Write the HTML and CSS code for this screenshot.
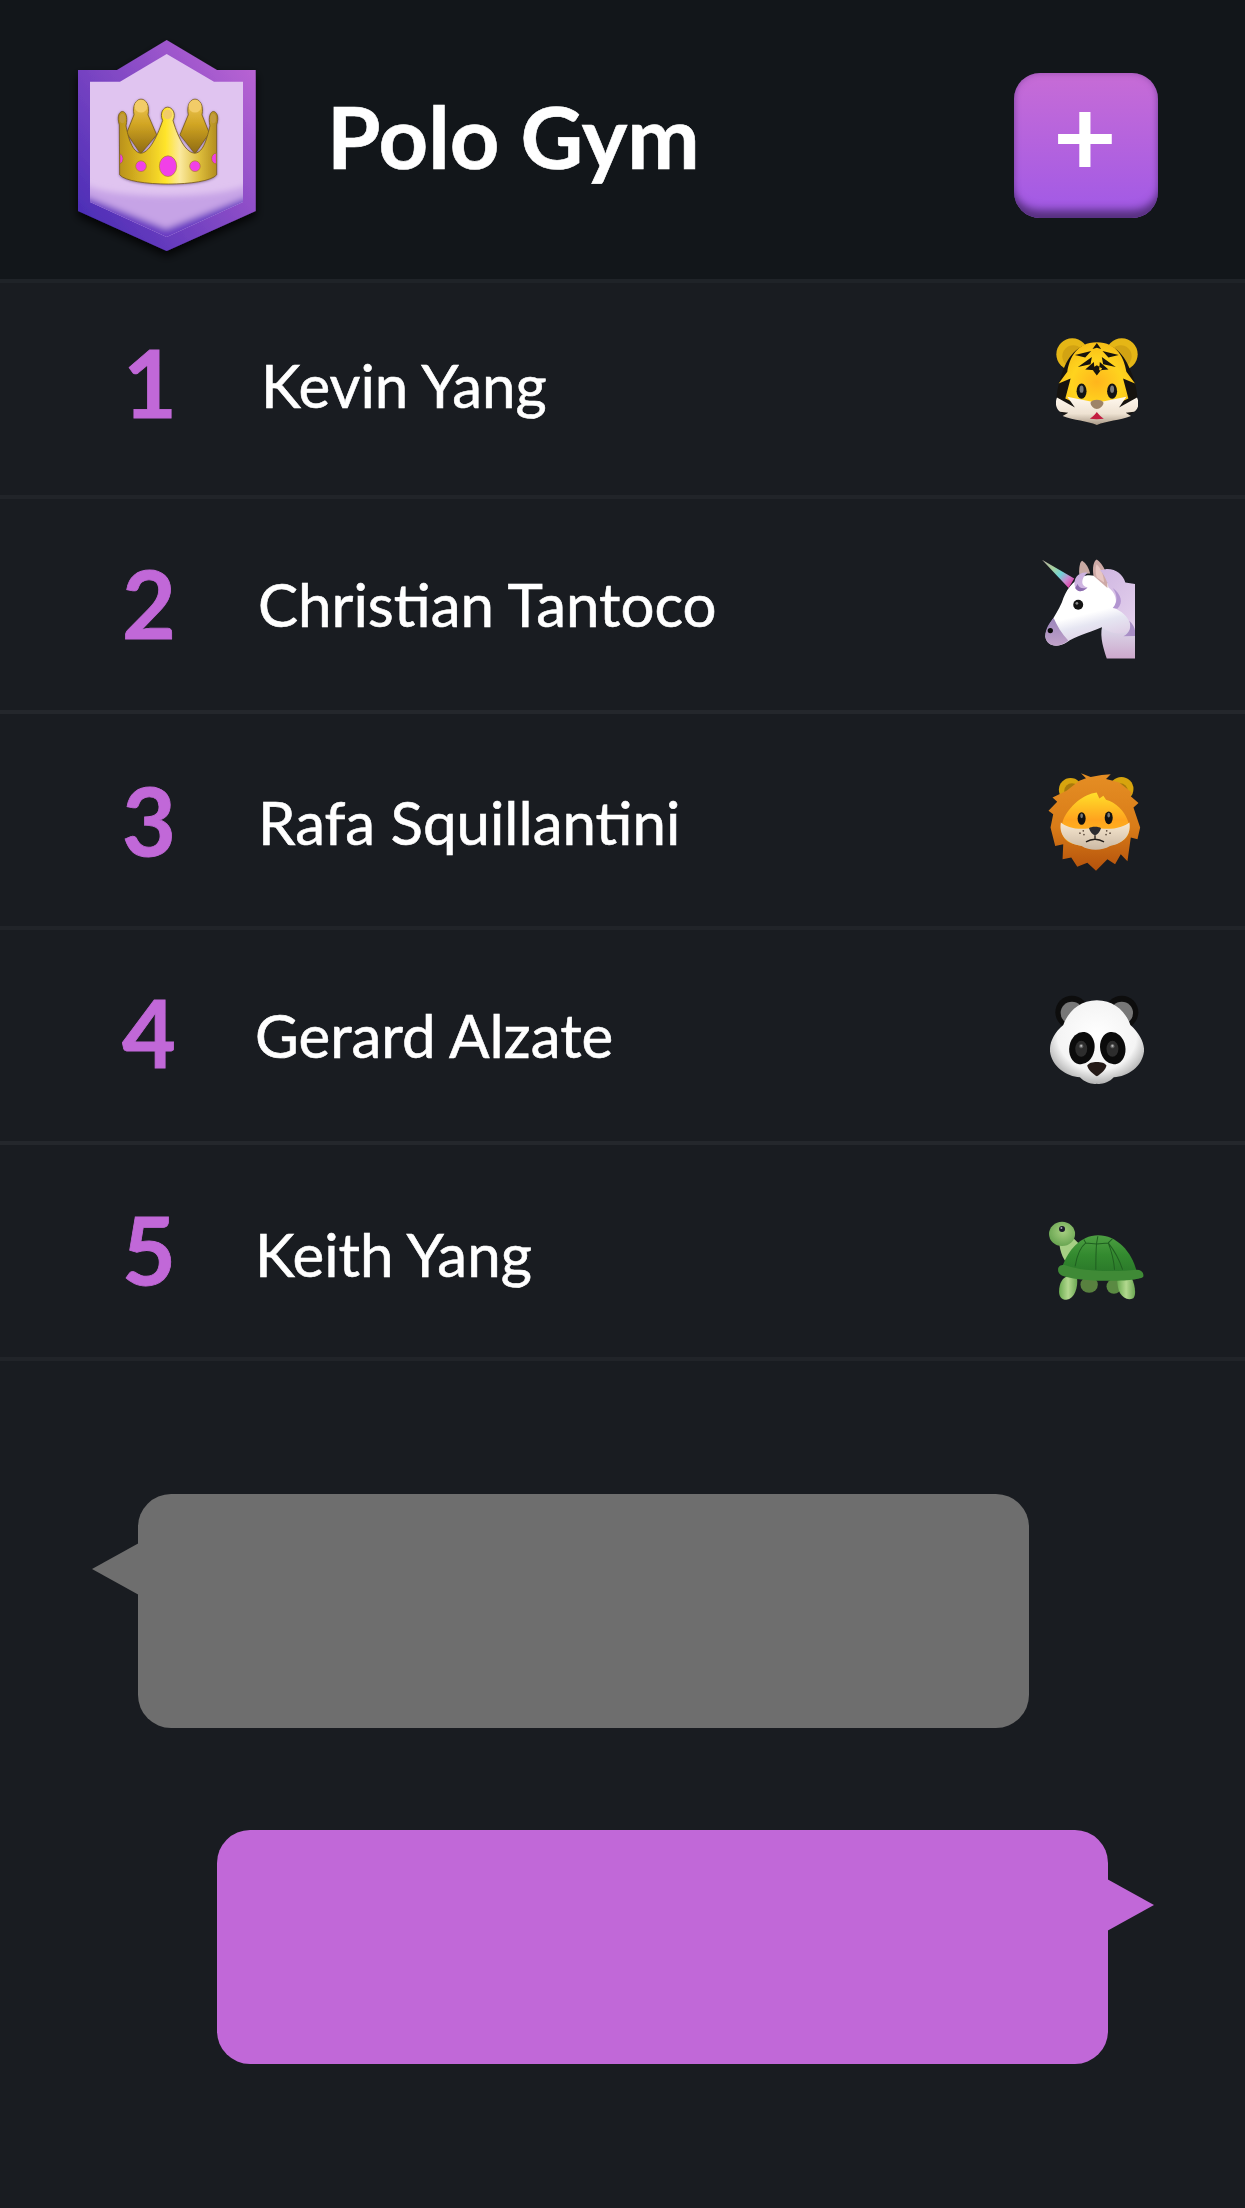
FILE: index.html
```html
<!DOCTYPE html>
<html lang="en">
<head>
<meta charset="utf-8">
<title>Polo Gym</title>
<link rel="stylesheet" href="styles.css">
</head>
<body>
<div class="page">
  <header class="header">
    <svg class="badge" viewBox="60 28 214 240" aria-hidden="true">
      <defs>
        <linearGradient id="bo" x1="0.05" y1="0.9" x2="0.95" y2="0.1">
          <stop offset="0" stop-color="#4a2db6"/><stop offset="1" stop-color="#b863d3"/>
        </linearGradient>
        <linearGradient id="cf" x1="0" y1="0" x2="1" y2="0">
          <stop offset="0" stop-color="#b8901c"/><stop offset="0.28" stop-color="#e3bf22"/><stop offset="0.48" stop-color="#ffe52c"/><stop offset="0.62" stop-color="#fbe99e"/><stop offset="0.82" stop-color="#dcbc3a"/><stop offset="1" stop-color="#b08a1c"/>
        </linearGradient>
        <linearGradient id="cb" x1="0" y1="0" x2="0" y2="1">
          <stop offset="0" stop-color="#f0c95a"/><stop offset="0.45" stop-color="#d2a624"/><stop offset="1" stop-color="#8e6a10"/>
        </linearGradient>
        <filter id="bs" x="-20%" y="-20%" width="140%" height="140%"><feDropShadow dx="0" dy="5" stdDeviation="5" flood-color="#000" flood-opacity="0.85"/></filter>
        <filter id="cs" x="-15%" y="-15%" width="130%" height="130%"><feDropShadow dx="0" dy="2" stdDeviation="3" flood-color="#4a3060" flood-opacity="0.55"/></filter>
        <filter id="bb"><feGaussianBlur stdDeviation="3"/></filter>
        <clipPath id="bic"><polygon points="166.7,54 120,81.7 90,81.7 90,202 166.7,237 243,202 243,81.7 214,81.7"/></clipPath>
      </defs>
      <polygon filter="url(#bs)" fill="url(#bo)" points="166.7,40 117,70 78,70 78,211 166.7,251 255.7,211 255.7,70 217,70"/>
      <g clip-path="url(#bic)">
        <rect x="85" y="50" width="165" height="195" fill="#e0c4f0"/>
        <g filter="url(#bb)">
          <path d="M84 184 C110 200 220 200 250 184 L250 245 L84 245 Z" fill="#c6a3e6"/>
          <path d="M84 196 L84 210 L166 246 L250 210 L250 196 L166 229 Z" fill="#6b3dc2"/>
        </g>
      </g>
      <g transform="translate(118 98.5) scale(0.3333) translate(-354 -296)" filter="url(#cs)">
        <path d="M380 400 L402 345 C396 315 410 298 423 298 C437 298 450 315 444 345 L470 405 L422 462 Z" fill="url(#cb)" stroke="#7a5c18" stroke-width="2.5"/>
        <path d="M540 405 L565 345 C559 315 572 298 585 298 C598 298 612 315 606 345 L628 400 L585 462 Z" fill="url(#cb)" stroke="#7a5c18" stroke-width="2.5"/>
        <circle cx="423" cy="319" r="19" fill="#f2cc68"/><circle cx="585" cy="319" r="19" fill="#f2cc68"/>
        <path d="M359 525 L358 375 C350 350 358 335 367 335 C377 335 384 350 378 378 C384 410 396 458 422 460 C445 460 468 420 488 362 C478 340 490 322 503 322 C516 322 530 340 519 362 C536 420 560 460 585 460 C612 458 622 410 630 378 C624 350 632 335 640 335 C650 335 658 350 650 375 L650 525 C620 562 390 562 359 525 Z" fill="url(#cf)" stroke="#7a5c18" stroke-width="2.5"/>
        <ellipse cx="367" cy="356" rx="8" ry="14" fill="#c29c3c"/><ellipse cx="640" cy="356" rx="8" ry="14" fill="#c29c3c"/>
        <circle cx="503" cy="344" r="14" fill="#f2cc68"/>
        <path d="M360 462 a14 16 0 0 1 0 30 Z" fill="#f03ee6" stroke="#9a7a20" stroke-width="2"/>
        <path d="M649 460 a14 16 0 0 0 0 32 Z" fill="#f03ee6" stroke="#9a7a20" stroke-width="2"/>
        <circle cx="423" cy="499" r="16" fill="#f13fe8" stroke="#a8861e" stroke-width="2"/>
        <circle cx="585" cy="499" r="16" fill="#f13fe8" stroke="#a8861e" stroke-width="2"/>
        <ellipse cx="504" cy="499" rx="26" ry="31" fill="#f13fe8" stroke="#a8861e" stroke-width="2"/>
      </g>
    </svg>
    <h1 class="title">Polo Gym</h1>
    <button class="add" type="button">+</button>
  </header>

  <ul class="board">
    <li class="row row-1">
      <span class="rank">1</span><span class="name">Kevin Yang</span>
      <svg class="emoji tiger" viewBox="288 893 247 262" aria-hidden="true">
        <defs>
          <radialGradient id="tf" cx="0.5" cy="0.6" r="0.6"><stop offset="0" stop-color="#ffb51c"/><stop offset="0.55" stop-color="#ffd31e"/><stop offset="1" stop-color="#f7bd16"/></radialGradient>
          <linearGradient id="tm" x1="0" y1="0" x2="0" y2="1"><stop offset="0" stop-color="#fff8ee"/><stop offset="0.6" stop-color="#eee2d2"/><stop offset="1" stop-color="#a89886"/></linearGradient>
        </defs>
        <circle cx="337" cy="942" r="48" fill="#e5b616"/><circle cx="340" cy="948" r="33" fill="#d2a313"/>
        <circle cx="486" cy="942" r="48" fill="#e5b616"/><circle cx="483" cy="948" r="33" fill="#d2a313"/>
        <path d="M411 908 C340 908 315 970 303 1010 C290 1050 282 1095 300 1115 C330 1140 380 1140 411 1155 C442 1140 495 1140 523 1115 C542 1095 532 1050 520 1010 C505 970 482 908 411 908 Z" fill="#16130f"/>
        <path d="M411 906 C350 906 328 955 322 995 L296 1030 L332 1015 L316 1075 L352 1092 L411 1105 L470 1092 L506 1075 L490 1015 L526 1030 L500 995 C494 955 472 906 411 906 Z" fill="url(#tf)"/>
        <path d="M291 1072 L345 1102 L322 1070 L411 1088 L500 1070 L478 1102 L532 1072 C542 1095 532 1110 523 1115 L498 1118 L514 1128 C480 1142 440 1142 411 1155 C382 1142 342 1142 308 1128 L325 1118 L300 1115 C290 1108 283 1092 291 1072 Z" fill="url(#tm)"/>
        <path d="M411 908 L398 926 L411 922 L424 926 Z M345 944 L394 932 L376 952 Z M477 944 L428 932 L446 952 Z M354 980 L396 950 L392 972 Z M468 980 L426 950 L430 972 Z M376 988 L402 965 L404 990 Z M446 988 L420 965 L418 990 Z M411 1006 L395 985 L411 975 L427 985 Z" fill="#17130d"/>
        <ellipse cx="365" cy="1053" rx="15" ry="23" fill="#131313"/><ellipse cx="457" cy="1053" rx="15" ry="23" fill="#131313"/>
        <ellipse cx="365" cy="1047" rx="6" ry="11" fill="#7c7c7c"/><ellipse cx="457" cy="1047" rx="6" ry="11" fill="#7c7c7c"/>
        <path d="M392 1088 C395 1076 427 1076 431 1088 C431 1098 420 1106 411 1107 C402 1106 392 1098 392 1088 Z" fill="#9e8468"/>
        <path d="M390 1136 C400 1130 407 1122 411 1116 C415 1122 422 1130 432 1136 C420 1138 402 1138 390 1136 Z" fill="#c31d40"/>
      </svg>
    </li>
    <li class="row row-2">
      <span class="rank">2</span><span class="name">Christian Tantoco</span>
      <svg class="emoji unicorn" viewBox="122 85 283 300" aria-hidden="true">
        <defs>
          <linearGradient id="uh" x1="0.3" y1="0" x2="0.6" y2="1"><stop offset="0" stop-color="#fff"/><stop offset="0.55" stop-color="#fff"/><stop offset="0.7" stop-color="#e6e6f2"/><stop offset="1" stop-color="#dcc8e2"/></linearGradient>
          <linearGradient id="un" x1="0" y1="0" x2="0" y2="1"><stop offset="0" stop-color="#f6f6fb"/><stop offset="0.4" stop-color="#dcdcec"/><stop offset="1" stop-color="#cda8cc"/></linearGradient>
          <linearGradient id="us" x1="0" y1="0" x2="0" y2="1"><stop offset="0" stop-color="#9b85bb"/><stop offset="1" stop-color="#c0a2c9"/></linearGradient>
          <linearGradient id="uc" x1="0" y1="0" x2="1" y2="0.8"><stop offset="0" stop-color="#b7a9a0"/><stop offset="0.35" stop-color="#a8d19e"/><stop offset="0.6" stop-color="#6fd4d8"/><stop offset="0.8" stop-color="#c88ccf"/><stop offset="1" stop-color="#e03fa8"/></linearGradient>
          <linearGradient id="um" x1="0" y1="0" x2="1" y2="1"><stop offset="0" stop-color="#c9aede"/><stop offset="1" stop-color="#e6d4ee"/></linearGradient>
        </defs>
        <path d="M405 220 L405 384 L320 384 C312 360 298 320 306 288 C325 262 345 245 370 235 Z" fill="url(#un)"/>
        <path d="M390 300 C350 320 320 300 305 290 C260 308 222 320 200 335 C175 352 140 350 135 318 C135 290 165 262 185 215 C196 180 215 150 255 135 C300 125 350 170 360 220 C380 240 395 270 390 300 Z" fill="url(#uh)"/>
        <path d="M135 318 C135 295 148 275 160 262 C170 285 185 310 204 330 C178 354 138 350 135 318 Z" fill="url(#us)"/>
        <path d="M125 87 L222 143 L205 172 Z" fill="url(#uc)"/>
        <path d="M237 130 C236 108 240 92 246 90 C258 98 266 112 270 128 Z" fill="#c8a9a3"/>
        <path d="M280 135 C276 112 280 90 290 86 C310 100 325 130 322 172 Z" fill="#cda9a6"/>
        <path d="M289 100 C285 115 286 128 290 140 L312 155 C310 130 302 112 289 100 Z" fill="#e8c6c2"/>
        <path d="M225 172 C215 140 240 122 262 126 L300 118 C310 128 322 150 325 170 C345 185 355 210 342 232 C360 240 385 255 392 285 C394 300 385 312 370 317 L405 316 L405 160 L376 155 C368 130 345 112 316 115 L262 126 C245 140 238 165 262 170 C245 186 232 184 225 172 Z" fill="url(#um)"/>
        <path d="M370 317 C390 306 394 290 388 270 C398 280 404 290 405 300 L405 316 Z" fill="#a98fc6"/>
        <path d="M338 232 C354 215 352 192 338 172 C362 190 372 215 352 234 Z" fill="#b295d0"/>
        <path d="M225 172 C232 184 245 186 262 170 C248 176 236 172 232 160 Z" fill="#8c6cae"/>
        <circle cx="234" cy="222" r="15" fill="#141414"/><circle cx="230" cy="218" r="4" fill="#8a8a8a"/>
        <circle cx="150" cy="300" r="8" fill="#0a0a0a"/>
      </svg>
    </li>
    <li class="row row-3">
      <span class="rank">3</span><span class="name">Rafa Squillantini</span>
      <svg class="emoji lion" viewBox="145 732 277 293" aria-hidden="true">
        <defs>
          <linearGradient id="lm" x1="0" y1="0" x2="0" y2="1"><stop offset="0" stop-color="#e58e24"/><stop offset="0.55" stop-color="#d97c18"/><stop offset="1" stop-color="#b4520c"/></linearGradient>
          <linearGradient id="lf" x1="0" y1="0" x2="0" y2="1"><stop offset="0" stop-color="#ffe02a"/><stop offset="0.5" stop-color="#ffa41e"/><stop offset="1" stop-color="#ffbf1e"/></linearGradient>
          <linearGradient id="lc" x1="0" y1="0" x2="0" y2="1"><stop offset="0" stop-color="#f8e8d0"/><stop offset="1" stop-color="#cbb9a4"/></linearGradient>
        </defs>
        <circle cx="212" cy="782" r="35" fill="#d7a40e"/><circle cx="216" cy="786" r="23" fill="#a87a0c"/>
        <circle cx="364" cy="780" r="36" fill="#d7a40e"/><circle cx="360" cy="786" r="23" fill="#a87a0c"/>
        <path d="M243 733 L272 744 L305 738 L332 736 L318 750 L356 760 L395 790 L390 800 L415 822 L400 835 L420 895 L412 930 L392 925 L382 996 L362 975 L345 1005 L322 990 L288 1024 L262 1000 L232 1012 L214 985 L188 990 L190 945 L166 950 L152 895 L160 855 L146 845 L172 818 L158 805 L200 785 L238 755 L258 748 Z" fill="url(#lm)"/>
        <path d="M290 790 C250 795 208 830 190 872 C175 915 196 940 225 945 C250 955 320 955 345 945 C380 935 398 910 382 872 C372 845 348 820 318 812 L310 800 L298 808 Z" fill="url(#lf)"/>
        <path d="M183 880 C200 895 235 905 285 895 C330 905 370 895 388 880 C395 925 360 945 330 950 C305 965 268 965 245 950 C210 945 175 925 183 880 Z" fill="url(#lc)"/>
        <ellipse cx="245" cy="868" rx="12" ry="19" fill="#111"/><ellipse cx="326" cy="866" rx="12" ry="19" fill="#111"/>
        <ellipse cx="245" cy="860" rx="4" ry="7" fill="#777"/><ellipse cx="326" cy="858" rx="4" ry="7" fill="#777"/>
        <path d="M267 897 C272 891 298 891 303 897 C300 908 292 916 285 918 C278 916 270 908 267 897 Z" fill="#2b2b2f"/>
        <path d="M285 918 L285 930 M258 938 C268 932 278 930 285 930 C294 930 302 932 312 938" fill="none" stroke="#221c18" stroke-width="4"/>
        <g fill="#5b4a3c"><circle cx="240" cy="912" r="2.5"/><circle cx="250" cy="905" r="2.5"/><circle cx="252" cy="916" r="2.5"/><circle cx="320" cy="905" r="2.5"/><circle cx="330" cy="912" r="2.5"/><circle cx="318" cy="916" r="2.5"/></g>
      </svg>
    </li>
    <li class="row row-4">
      <span class="rank">4</span><span class="name">Gerard Alzate</span>
      <svg class="emoji panda" viewBox="150 80 283 268" aria-hidden="true">
        <defs>
          <radialGradient id="pf" cx="0.5" cy="0.42" r="0.6"><stop offset="0" stop-color="#fff"/><stop offset="0.7" stop-color="#f4f4f4"/><stop offset="1" stop-color="#a9a9a9"/></radialGradient>
          <radialGradient id="pe" cx="0.5" cy="0.5" r="0.6"><stop offset="0" stop-color="#8a8a8a"/><stop offset="1" stop-color="#3a3a3a"/></radialGradient>
        </defs>
        <circle cx="216" cy="132" r="50" fill="#0d0d0d"/><circle cx="216" cy="134" r="34" fill="#777"/>
        <circle cx="366" cy="132" r="50" fill="#0d0d0d"/><circle cx="366" cy="134" r="34" fill="#777"/>
        <path d="M291 96 C240 96 205 130 190 170 C160 195 148 225 150 250 C155 295 200 325 240 328 C255 345 280 350 291 347 C302 350 328 345 342 328 C385 325 428 295 433 250 C435 225 420 195 392 170 C378 130 342 96 291 96 Z" fill="url(#pf)"/>
        <ellipse cx="246" cy="240" rx="38" ry="49" transform="rotate(10 246 240)" fill="#0b0b0b"/>
        <ellipse cx="339" cy="240" rx="38" ry="49" transform="rotate(-10 339 240)" fill="#0b0b0b"/>
        <ellipse cx="244" cy="242" rx="18" ry="24" fill="#2d2d2d"/><ellipse cx="338" cy="242" rx="18" ry="24" fill="#2d2d2d"/>
        <circle cx="244" cy="234" r="7" fill="url(#pe)"/><circle cx="338" cy="234" r="7" fill="url(#pe)"/>
        <circle cx="244" cy="233" r="3" fill="#bbb"/><circle cx="338" cy="233" r="3" fill="#bbb"/>
        <path d="M262 292 C270 278 312 278 320 292 C318 305 302 318 291 325 C280 318 264 305 262 292 Z" fill="#241a17"/>
      </svg>
    </li>
    <li class="row row-5">
      <span class="rank">5</span><span class="name">Keith Yang</span>
      <svg class="emoji turtle" viewBox="148 760 284 235" aria-hidden="true">
        <defs>
          <linearGradient id="ts" x1="0" y1="0" x2="0" y2="1"><stop offset="0" stop-color="#4d9f42"/><stop offset="0.55" stop-color="#338a2f"/><stop offset="1" stop-color="#2b7a2a"/></linearGradient>
          <linearGradient id="tl" x1="0" y1="0" x2="1" y2="0"><stop offset="0" stop-color="#6aab50"/><stop offset="0.5" stop-color="#b3d98f"/><stop offset="1" stop-color="#6ba652"/></linearGradient>
          <radialGradient id="th" cx="0.55" cy="0.4" r="0.7"><stop offset="0" stop-color="#a6cf80"/><stop offset="1" stop-color="#5f9e4a"/></radialGradient>
        </defs>
        <path d="M180 810 C175 840 190 875 205 890 L240 830 L210 800 Z" fill="#a6cf84"/>
        <ellipse cx="187" cy="798" rx="39" ry="36" fill="url(#th)"/>
        <circle cx="187" cy="783" r="9" fill="#1a1a2a"/><circle cx="185" cy="780" r="3" fill="#a5a5b5"/>
        <ellipse cx="268" cy="950" rx="26" ry="24" fill="#58803f"/><ellipse cx="342" cy="955" rx="22" ry="22" fill="#5a8a42"/>
        <path d="M178 970 C178 945 190 925 205 925 L232 928 C235 960 225 990 200 995 C185 995 178 985 178 970 Z" fill="url(#tl)"/>
        <path d="M352 935 L395 930 C405 950 410 980 400 990 C385 998 370 990 360 975 C355 965 352 950 352 935 Z" fill="url(#tl)"/>
        <path d="M190 890 C205 850 240 802 295 802 C350 802 395 850 410 910 L190 910 Z" fill="url(#ts)"/>
        <path d="M226 895 C232 860 245 835 258 825 L252 815 M258 825 L290 828 L294 805 M290 828 L325 825 L338 812 M325 825 C345 850 360 880 368 905 M290 828 C288 855 288 880 288 905 M325 825 C335 850 342 880 344 905" fill="none" stroke="#1f5f20" stroke-width="3"/>
        <path d="M175 905 C175 893 185 890 195 891 C250 912 350 912 410 905 C425 905 432 915 430 925 C425 940 260 945 195 925 C182 922 175 915 175 905 Z" fill="#3f8a36"/>
      </svg>
    </li>
  </ul>

  <div class="bubble bubble-in"></div>
  <div class="bubble bubble-out"></div>
</div>
</body>
</html>
```
FILE: styles.css
```css
* { box-sizing: border-box; }
html, body { margin: 0; padding: 0; background: #191c21; }
body { font-family: "Lato", "Liberation Sans", sans-serif; color: #fff; }
.page { width: 1245px; height: 2208px; overflow: hidden; }

.header {
  height: 283px;
  background: #12161a;
  border-bottom: 4px solid #1f2328;
  display: flex;
  align-items: flex-start;
  padding-top: 28px;
  padding-left: 60px;
}
.badge { width: 214px; height: 240px; flex: none; }
.title {
  margin: 0;
  margin-top: 58px;
  margin-left: 53px;
  font-size: 86.5px;
  line-height: 100px;
  font-weight: 700;
  -webkit-text-stroke: 0.6px #fff;
  white-space: nowrap;
}
.add {
  margin-left: auto;
  margin-right: 87px;
  margin-top: 45px;
  width: 144px;
  height: 145px;
  border: 0;
  border-radius: 26px;
  padding: 0 2px 26px 0;
  background: linear-gradient(180deg, #c76cd6 0%, #a059e6 100%);
  box-shadow: inset 0 -12px 8px -4px #57307f, inset 0 0 6px rgba(90, 50, 130, 0.5);
  color: #fff;
  font-family: "Lato", sans-serif;
  font-weight: 700;
  font-size: 110px;
  line-height: 110px;
}

.board { list-style: none; margin: 0; padding: 0; }
.row {
  height: 215.6px;
  border-bottom: 4px solid #24272c;
  display: flex;
  align-items: flex-start;
  background: #191c21;
}
.row:nth-child(odd) { border-bottom-color: #212429; }
.rank {
  flex: none;
  width: 48px;
  margin-left: var(--rank-left);
  margin-top: var(--rank-top);
  font-size: 93px;
  line-height: 92px;
  font-weight: 700;
  -webkit-text-stroke: 0.8px #c168d8;
  color: #c168d8;
  text-align: center;
}
.name {
  margin-left: var(--name-left);
  margin-top: var(--name-top);
  font-size: 60px;
  line-height: 72px;
  font-weight: 400;
  -webkit-text-stroke: 0.6px #fff;
  white-space: nowrap;
}
.emoji {
  flex: none;
  display: block;
  margin-left: auto;
  margin-right: var(--emoji-right);
  margin-top: var(--emoji-top);
  filter: blur(0.35px);
}
.row-1 { --rank-left: 123px; --rank-top: 53px; --name-left: 90px; --name-top: 66px; --emoji-right: 107px; --emoji-top: 55px; }
.row-2 { --rank-left: 122px; --rank-top: 58px; --name-left: 88px; --name-top: 69px; --emoji-right: 110px; --emoji-top: 60px; }
.row-3 { --rank-left: 122px; --rank-top: 60px; --name-left: 88px; --name-top: 72px; --emoji-right: 104px; --emoji-top: 59px; }
.row-4 { --rank-left: 122px; --rank-top: 56px; --name-left: 85px; --name-top: 69px; --emoji-right: 101px; --emoji-top: 65px; }
.row-5 { --rank-left: 122px; --rank-top: 58px; --name-left: 85px; --name-top: 73px; --emoji-right: 101px; --emoji-top: 76px; }

.tiger { width: 82px; height: 87px; }
.unicorn { width: 94px; height: 100px; }
.lion { width: 93px; height: 98px; }
.panda { width: 94px; height: 89px; }
.turtle { width: 95px; height: 79px; }

.bubble {
  position: relative;
  width: 891px;
  height: 234px;
  border-radius: 33px;
}
.bubble::after {
  content: "";
  position: absolute;
  top: 49px;
  width: 47px;
  height: 52px;
}
.bubble-in {
  margin-top: 133px;
  margin-left: 138px;
  background: #6e6e6e;
}
.bubble-in::after {
  left: -46px;
  background: #6e6e6e;
  clip-path: polygon(0 50%, 100% 0, 100% 100%);
}
.bubble-out {
  margin-top: 102px;
  margin-left: 217px;
  background: #c168d8;
}
.bubble-out::after {
  right: -46px;
  background: #c168d8;
  clip-path: polygon(100% 50%, 0 0, 0 100%);
}
```
